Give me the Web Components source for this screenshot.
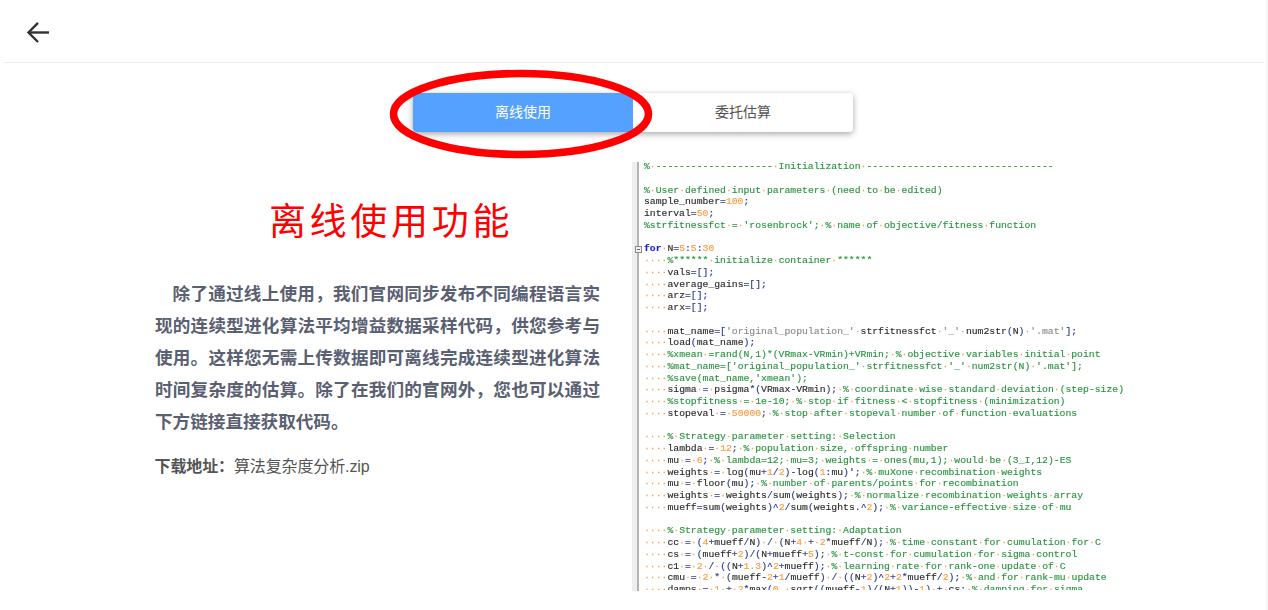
<!DOCTYPE html>
<html lang="zh">
<head>
<meta charset="utf-8">
<title>离线使用</title>
<style>
  html, body { margin: 0; height: 100%; overflow: hidden; background: #fff; }
  body { font-family: "Liberation Sans", "Noto Sans CJK SC", sans-serif; }
  #page { width: 1266px; height: 610px; border-right: 2px solid #f6f6f6; overflow: hidden; }
</style>
</head>
<body>
<div id="page">
  <top-bar></top-bar>
  <tab-switch>
    <tab-item slot="tabs" active>离线使用</tab-item>
    <tab-item slot="tabs">委托估算</tab-item>
  </tab-switch>
  <offline-panel heading="离线使用功能">
    除了通过线上使用，我们官网同步发布不同编程语言实现的连续型进化算法平均增益数据采样代码，供您参考与使用。这样您无需上传数据即可离线完成连续型进化算法时间复杂度的估算。除了在我们的官网外，您也可以通过下方链接直接获取代码。
    <span slot="download">算法复杂度分析.zip</span>
  </offline-panel>
</div>

<template id="code-lines">% -------------------- Initialization --------------------------------

% User defined input parameters (need to be edited)
sample_number=100;
interval=50;
%strfitnessfct = 'rosenbrock'; % name of objective/fitness function

for N=5:5:30
    %****** initialize container ******
    vals=[];
    average_gains=[];
    arz=[];
    arx=[];

    mat_name=['original_population_' strfitnessfct '_' num2str(N) '.mat'];
    load(mat_name);
    %xmean =rand(N,1)*(VRmax-VRmin)+VRmin; % objective variables initial point
    %mat_name=['original_population_' strfitnessfct '_' num2str(N) '.mat'];
    %save(mat_name,'xmean');
    sigma = psigma*(VRmax-VRmin); % coordinate wise standard deviation (step-size)
    %stopfitness = 1e-10; % stop if fitness &lt; stopfitness (minimization)
    stopeval = 50000; % stop after stopeval number of function evaluations

    % Strategy parameter setting: Selection
    lambda = 12; % population size, offspring number
    mu = 6; % lambda=12; mu=3; weights = ones(mu,1); would be (3_I,12)-ES
    weights = log(mu+1/2)-log(1:mu)'; % muXone recombination weights
    mu = floor(mu); % number of parents/points for recombination
    weights = weights/sum(weights); % normalize recombination weights array
    mueff=sum(weights)^2/sum(weights.^2); % variance-effective size of mu

    % Strategy parameter setting: Adaptation
    cc = (4+mueff/N) / (N+4 + 2*mueff/N); % time constant for cumulation for C
    cs = (mueff+2)/(N+mueff+5); % t-const for cumulation for sigma control
    c1 = 2 / ((N+1.3)^2+mueff); % learning rate for rank-one update of C
    cmu = 2 * (mueff-2+1/mueff) / ((N+2)^2+2*mueff/2); % and for rank-mu update
    damps = 1 + 2*max(0, sqrt((mueff-1)/(N+1))-1) + cs; % damping for sigma</template>

<script>
class TopBar extends HTMLElement {
  connectedCallback() {
    this.attachShadow({ mode: 'open' });
    this.shadowRoot.innerHTML = `
      <style>
        :host { display: block; margin: 0 2px 0 3px; height: 62px; border-bottom: 1px solid #eeeeee; }
        .back { display: flex; align-items: center; height: 64px; padding-left: 22px; }
        svg { display: block; }
      </style>
      <div class="back">
        <svg width="26" height="26" viewBox="0 0 26 26" fill="none" stroke="#333" stroke-width="2.4">
          <path d="M3.5 13.5H24"/>
          <path d="M13 3.8 L3.5 13.5 L13 23" />
        </svg>
      </div>
    `;
  }
}
customElements.define('top-bar', TopBar);

class TabItem extends HTMLElement {
  connectedCallback() {
    this.attachShadow({ mode: 'open' });
    this.shadowRoot.innerHTML = `
      <style>
        :host {
          display: flex;
          justify-content: center;
          align-items: center;
          box-sizing: border-box;
          width: 220px;
          height: 39px;
          padding-bottom: 3px;
          font-size: 14px;
          color: #555;
          background: #fff;
        }
        :host([active]) { color: #fff; background: #54a1ff; }
      </style>
      <slot></slot>
    `;
  }
}
customElements.define('tab-item', TabItem);

class TabSwitch extends HTMLElement {
  connectedCallback() {
    this.attachShadow({ mode: 'open' });
    this.shadowRoot.innerHTML = `
      <style>
        :host { display: block; padding: 30px 0 0 413px; height: 39px; }
        .group {
          position: relative;
          display: flex;
          width: 440px;
          border-radius: 4px;
          box-shadow: 0 2px 6px rgba(0, 0, 0, 0.35);
        }
        ::slotted(tab-item:first-child) { border-radius: 4px 0 0 4px; }
        ::slotted(tab-item:last-child) { border-radius: 0 4px 4px 0; }
        svg { position: absolute; left: -27px; top: -26px; pointer-events: none; }
      </style>
      <div class="group">
        <slot name="tabs"></slot>
        <svg width="270" height="96" viewBox="0 0 270 96" fill="none">
          <ellipse cx="135" cy="47" rx="127.5" ry="40.5" stroke="#f00" stroke-width="7.6"/>
        </svg>
      </div>
    `;
  }
}
customElements.define('tab-switch', TabSwitch);

class OfflinePanel extends HTMLElement {
  connectedCallback() {
    const heading = this.getAttribute('heading');
    this.attachShadow({ mode: 'open' });
    this.shadowRoot.innerHTML = `
      <style>
        :host { display: flex; padding: 30px 0 0 155px; gap: 5px; }
        .text { width: 472px; flex: none; }
        h1 {
          margin: 36px 0 0;
          font-size: 37px;
          line-height: 50px;
          font-weight: normal;
          letter-spacing: 3.7px;
          text-align: center;
          color: #f00;
        }
        p.body {
          width: 445px;
          margin: 30px 0 0;
          font-size: 17.6px;
          line-height: 32px;
          font-weight: bold;
          color: #5a6072;
          text-indent: 1em;
          text-align: justify;
        }
        p.link { margin: 17px 0 0 -0.5px; font-size: 16px; line-height: 24px; color: #555; letter-spacing: -0.12px; }
        b { color: #555; }
      </style>
      <div class="text">
        <h1>${heading}</h1>
        <p class="body"><slot></slot></p>
        <p class="link"><b>下载地址：</b><slot name="download"></slot></p>
      </div>
      <code-view></code-view>
    `;
  }
}
customElements.define('offline-panel', OfflinePanel);

class CodeView extends HTMLElement {
  connectedCallback() {
    const src = document.getElementById('code-lines').content.textContent;
    this.attachShadow({ mode: 'open' });
    this.shadowRoot.innerHTML = `
      <style>
        :host {
          display: block;
          position: relative;
          flex: 1;
          height: 429px;
          box-sizing: border-box;
          border-left: 5px solid #eeeeee;
        }
        .rule { position: absolute; left: 0; top: 0; bottom: 0; width: 2px; background: #b4b4b4; }
        .fold { position: absolute; left: -2px; top: 84px; width: 5px; height: 5px; border: 1px solid #8a8a8a; background: #f4f4f4; }
        .fold::after { content: ''; position: absolute; left: 1px; right: 1px; top: 2px; height: 1px; background: #666; }
        pre {
          height: 429px;
          overflow: hidden;
          margin: -1px 0 0;
          padding: 0 0 0 7px;
          font: 9.75px/11.75px "Liberation Mono", monospace;
          color: #2c2c2c;
          -webkit-text-stroke: 0.15px currentColor;
          filter: blur(0.3px);
          white-space: pre;
        }
        .c { color: #2a9440; }
        .s { color: #8c8c8c; }
        .n { color: #ff9a3c; }
        .k { color: #1a1ae0; font-weight: bold; }
        .o { color: #2a3a8c; }
        .d { color: #f0a050; }
      </style>
      <pre>${src.split('\n').map(l => this.highlight(l)).join('\n')}</pre>
      <div class="rule"></div>
      <div class="fold"></div>
    `;
  }

  esc(t) {
    return t.replace(/&/g, '&amp;').replace(/</g, '&lt;');
  }

  dots(t) {
    return this.esc(t).replace(/ /g, '<span class="d">·</span>');
  }

  // rough matlab colouring, same as the editor in the picture
  highlight(line) {
    let out = '';
    let rest = line;
    const re = /^(%.*)|^('[^']*')|^(\bfor\b)|^(\d+(\.\d+)?(e-\d+)?)|^([A-Za-z_]\w*)|^( )|^([\s\S])/;
    while (rest.length) {
      const m = rest.match(re);
      const t = m[0];
      if (m[1]) out += `<span class="c">${this.dots(t)}</span>`;
      else if (m[2] && !/[\w)]$/.test(line.slice(0, line.length - rest.length))) out += `<span class="s">${this.dots(t)}</span>`;
      else if (m[3]) out += `<span class="k">${t}</span>`;
      else if (m[4]) out += `<span class="n">${t}</span>`;
      else if (m[7]) out += t;
      else if (m[8]) out += '<span class="d">·</span>';
      else {
        out += `<span class="o">${this.esc(t[0])}</span>`;
        rest = rest.slice(1);
        continue;
      }
      rest = rest.slice(t.length);
    }
    return out;
  }
}
customElements.define('code-view', CodeView);
</script>
</body>
</html>
